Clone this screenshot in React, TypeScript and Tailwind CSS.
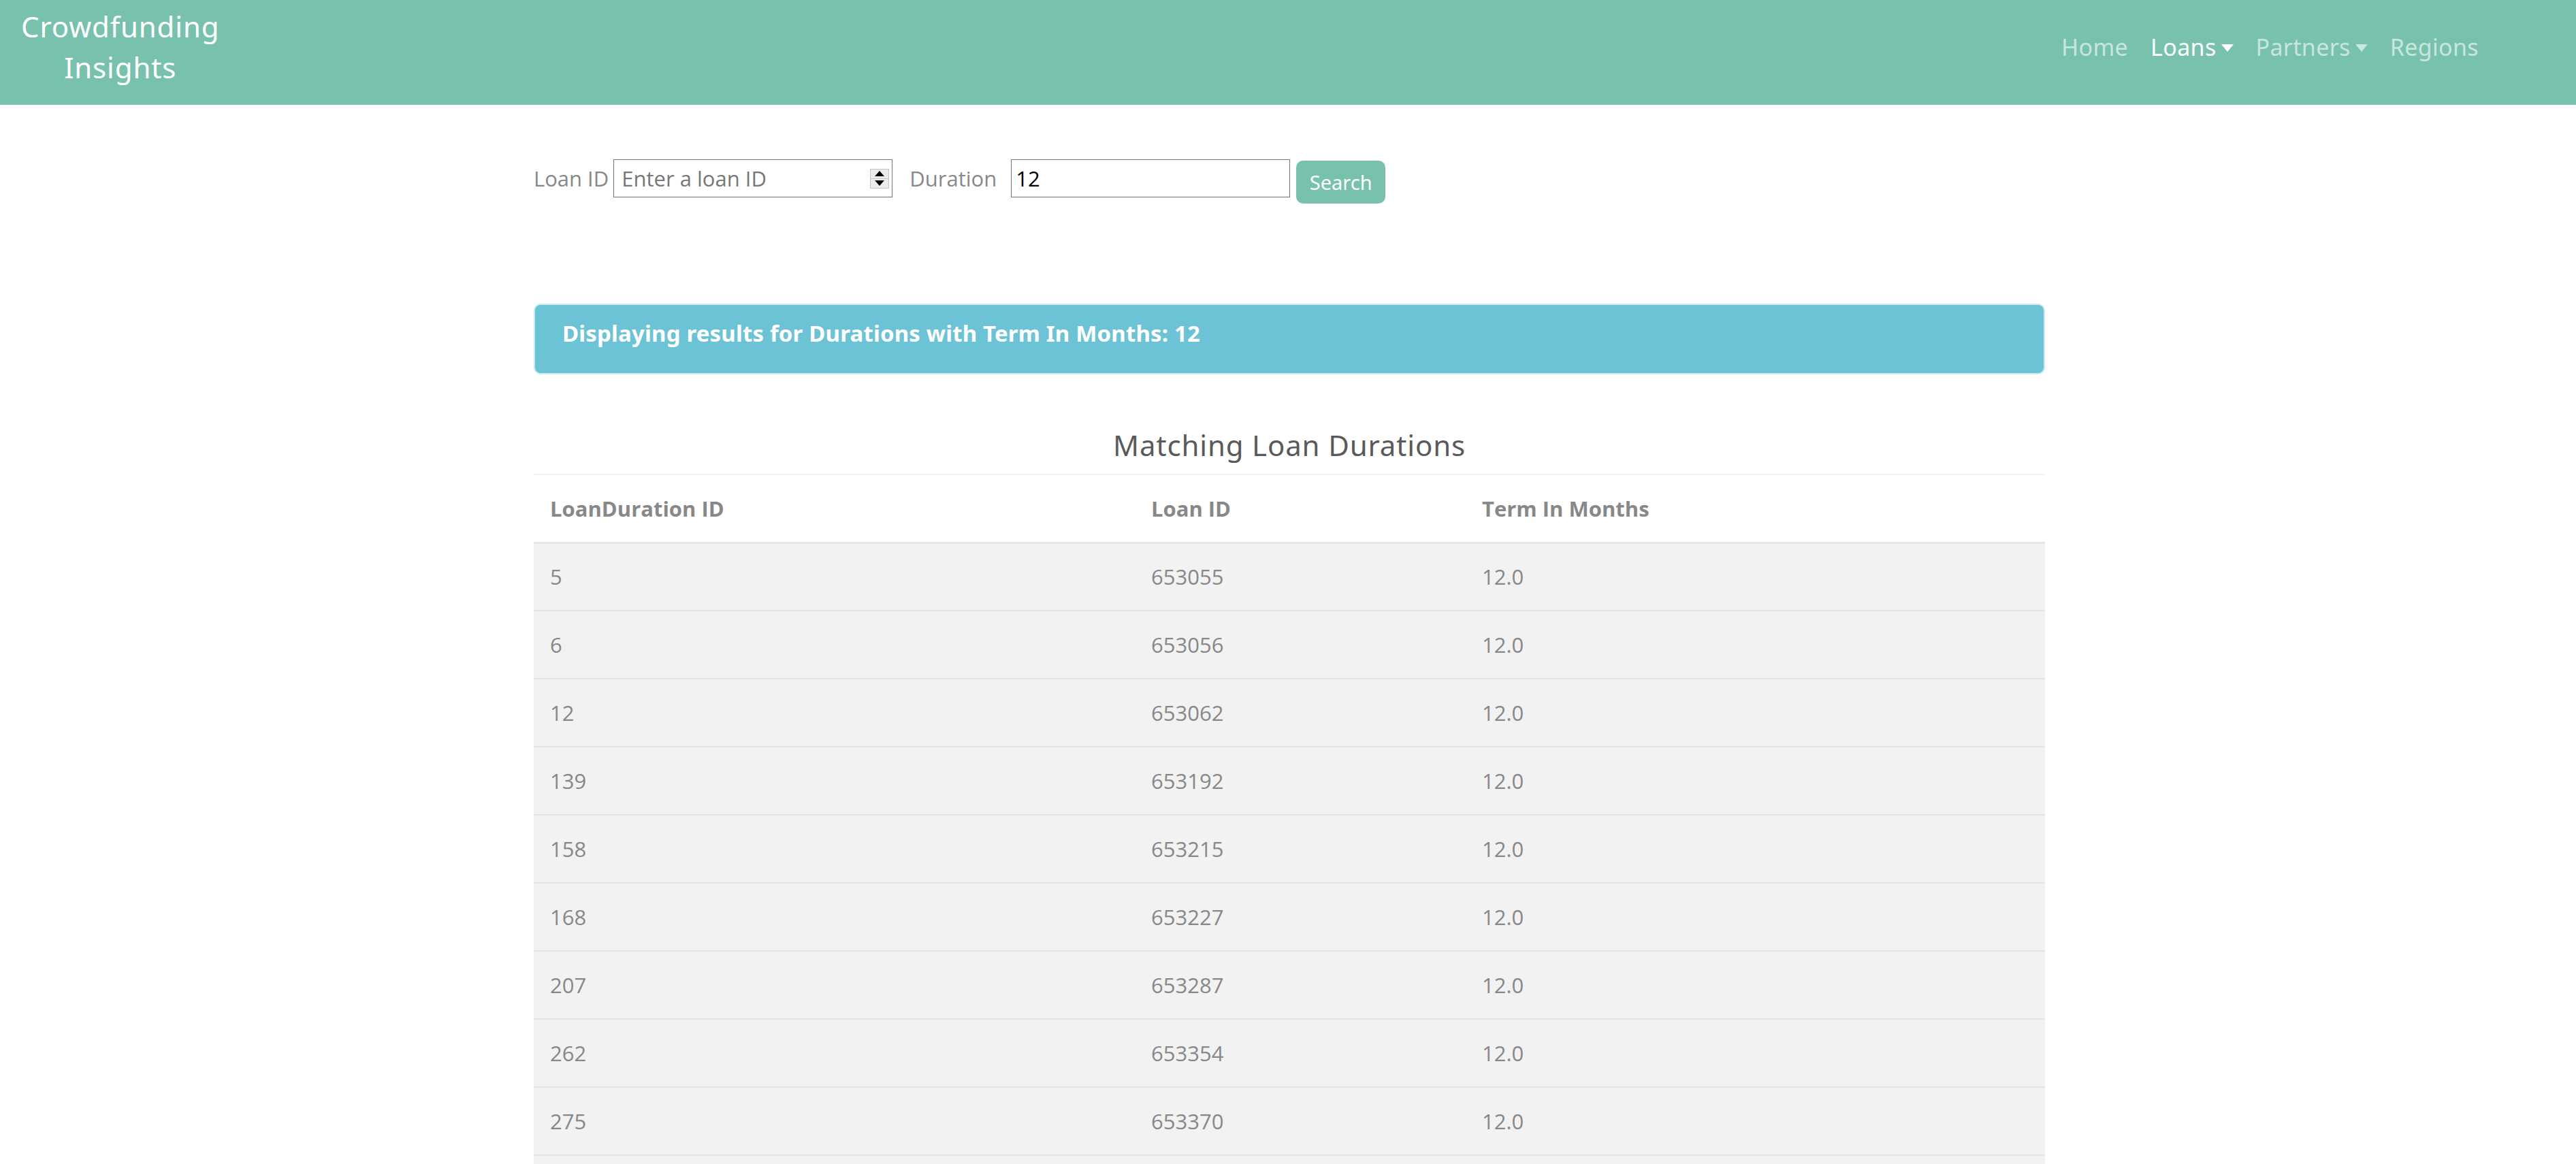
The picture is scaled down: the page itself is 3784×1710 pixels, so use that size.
import { useState } from "react"

type Row = { id: string; loanId: string; term: string }

const ROWS: Row[] = [
  { id: "5", loanId: "653055", term: "12.0" },
  { id: "6", loanId: "653056", term: "12.0" },
  { id: "12", loanId: "653062", term: "12.0" },
  { id: "139", loanId: "653192", term: "12.0" },
  { id: "158", loanId: "653215", term: "12.0" },
  { id: "168", loanId: "653227", term: "12.0" },
  { id: "207", loanId: "653287", term: "12.0" },
  { id: "262", loanId: "653354", term: "12.0" },
  { id: "275", loanId: "653370", term: "12.0" },
  { id: "301", loanId: "653402", term: "12.0" },
]

const HEAD = "font-['Noto_Sans',sans-serif]"
const BODY = "font-['Open_Sans',sans-serif]"

function Caret() {
  return <span className="ml-[7px] inline-block h-0 w-0 border-x-[9px] border-t-[11px] border-x-transparent border-t-current align-[6px]" />
}

function Navbar() {
  return (
    <nav className={`flex h-[154px] items-start justify-between bg-[#78c2ad] pl-[31px] pr-[143px] pt-[9px] ${HEAD}`}>
      <div className="text-center text-[42px] leading-[60px] tracking-[0.02em] text-white">
        Crowdfunding
        <br />
        Insights
      </div>
      <div className="flex h-[120px] items-center gap-[33px] text-[34px] tracking-[0.01em] text-white/60">
        <a className="cursor-pointer">Home</a>
        <a className="cursor-pointer text-white">
          Loans
          <Caret />
        </a>
        <a className="cursor-pointer">
          Partners
          <Caret />
        </a>
        <a className="cursor-pointer">Regions</a>
      </div>
    </nav>
  )
}

function SearchForm() {
  const [loanId, setLoanId] = useState("")
  const [duration, setDuration] = useState("12")

  return (
    <form className={`flex items-start text-[31px] text-[#888] ${BODY}`} onSubmit={(e) => e.preventDefault()}>
      <label className="mr-[7px] leading-[56px]">Loan ID</label>
      <div className="flex h-[56px] w-[410px] items-center border border-[#767676] bg-white pl-[11px] pr-[4px]">
        <input
          value={loanId}
          onChange={(e) => setLoanId(e.target.value)}
          placeholder="Enter a loan ID"
          className="min-w-0 flex-1 bg-transparent text-black outline-none placeholder:text-[#777]"
        />
        {/* fake number spinner */}
        <div className="flex h-[29px] w-[28px] flex-col border border-[#c4c4c4] bg-[#ececec]">
          <div className="flex flex-1 items-center justify-center border-b border-[#c4c4c4]">
            <span className="h-0 w-0 border-x-[7px] border-b-[8px] border-x-transparent border-b-black" />
          </div>
          <div className="flex flex-1 items-center justify-center">
            <span className="h-0 w-0 border-x-[7px] border-t-[8px] border-x-transparent border-t-black" />
          </div>
        </div>
      </div>
      <label className="ml-[25px] mr-[21px] leading-[56px]">Duration</label>
      <input
        value={duration}
        onChange={(e) => setDuration(e.target.value)}
        className="h-[56px] w-[410px] border border-[#767676] bg-white pl-[6px] text-black outline-none"
      />
      <button
        type="submit"
        className={`ml-[9px] mt-[2px] h-[63px] w-[131px] rounded-[10px] bg-[#78c2ad] text-[29px] text-white ${HEAD}`}
      >
        Search
      </button>
    </form>
  )
}

export default function App() {
  return (
    <div className="min-h-screen bg-white">
      <Navbar />
      <main className="ml-[784px] w-[2220px] pt-[80px]">
        <SearchForm />

        <div className="mt-[147px] h-[104px] rounded-[10px] border-2 border-[#c9ebf2] bg-[#6cc3d5] pl-[40px] pt-[22px]">
          <h5 className={`text-[33px] font-bold leading-[40px] tracking-[0.005em] text-white ${HEAD}`}>
            Displaying results for Durations with Term In Months: 12
          </h5>
        </div>

        <h3 className={`mt-[78px] text-center text-[42px] leading-[52px] tracking-[0.02em] text-[#5a5a5a] ${HEAD}`}>
          Matching Loan Durations
        </h3>

        <table className={`mt-[16px] w-full border-collapse text-left text-[31px] text-[#888] ${BODY}`}>
          <thead>
            <tr className="h-[100px] border-t-2 border-b-[3px] border-t-[#f2f2f2] border-b-[#e6e6e6]">
              <th className="w-[883px] pl-[24px] font-bold">LoanDuration ID</th>
              <th className="w-[486px] pl-[24px] font-bold">Loan ID</th>
              <th className="pl-[24px] font-bold">Term In Months</th>
            </tr>
          </thead>
          <tbody>
            {ROWS.map((r) => (
              <tr key={r.id} className="h-[100px] border-b-2 border-[#e5e5e5] bg-[#f2f2f2]">
                <td className="pl-[24px]">{r.id}</td>
                <td className="pl-[24px]">{r.loanId}</td>
                <td className="pl-[24px]">{r.term}</td>
              </tr>
            ))}
          </tbody>
        </table>
      </main>
    </div>
  )
}
